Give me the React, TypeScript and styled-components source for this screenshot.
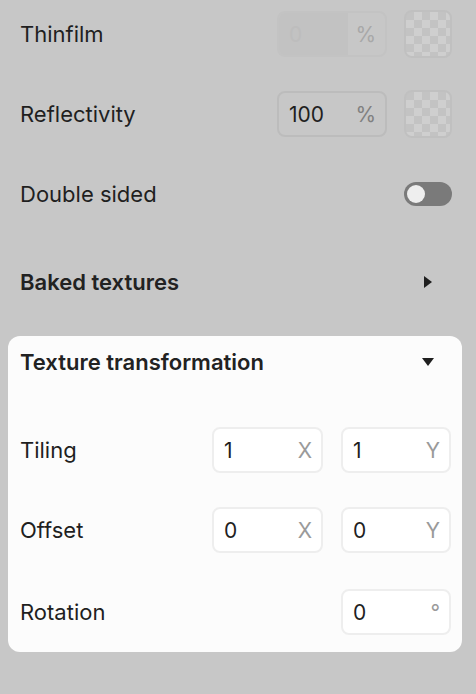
import React from "react";
import styled, { createGlobalStyle } from "styled-components";

const GlobalStyle = createGlobalStyle`
  html, body {
    margin: 0;
    padding: 0;
    background: #c7c7c7;
  }
  body {
    font-family: Inter, "Noto Sans", sans-serif;
    color: #1f1f1f;
    -webkit-font-smoothing: antialiased;
  }
`;

const Page = styled.div`
  display: flex;
  flex-direction: column;
  padding: 10px 24px 0 20px;
  height: 694px;
  box-sizing: border-box;
`;

const Row = styled.div<{ $mt?: number }>`
  display: flex;
  align-items: center;
  justify-content: space-between;
  height: 48px;
  margin-top: ${(p) => p.$mt ?? 0}px;
`;

const Label = styled.span`
  font-size: 22px;
  line-height: 26px;
  font-weight: 400;
  color: #1f1f1f;
`;

const HeaderLabel = styled.span`
  font-size: 22px;
  line-height: 26px;
  font-weight: 600;
  color: #222222;
`;

const Controls = styled.div<{ $gap?: number }>`
  display: flex;
  align-items: center;
  gap: ${(p) => p.$gap ?? 17}px;
`;

type Tone = "dim" | "dimDisabled" | "light";

const Field = styled.div<{ $tone: Tone; $w?: number }>`
  display: flex;
  align-items: stretch;
  width: ${(p) => p.$w ?? 110}px;
  height: 46px;
  box-sizing: border-box;
  border-radius: 8px;
  overflow: hidden;
  border: 2px solid
    ${(p) =>
      p.$tone === "light" ? "#eeeeee" : p.$tone === "dim" ? "#bcbcbc" : "#c3c3c3"};
  background: ${(p) => (p.$tone === "light" ? "#ffffff" : "#c7c7c7")};
`;

const FieldValue = styled.div<{ $tone: Tone }>`
  flex: 1;
  display: flex;
  align-items: center;
  padding-left: 10px;
  font-size: 21px;
  color: ${(p) => (p.$tone === "dimDisabled" ? "#bdbdbd" : "#1f1f1f")};
  background: ${(p) => (p.$tone === "dimDisabled" ? "#c2c2c2" : "transparent")};
`;

const FieldSuffix = styled.div<{ $tone: Tone }>`
  display: flex;
  align-items: center;
  justify-content: flex-end;
  width: 37px;
  padding-right: 9px;
  box-sizing: border-box;
  font-size: 21px;
  color: ${(p) =>
    p.$tone === "light" ? "#9a9a9a" : p.$tone === "dim" ? "#808080" : "#a8a8a8"};
`;

const Swatch = styled.div`
  width: 48px;
  height: 48px;
  box-sizing: border-box;
  border-radius: 8px;
  border: 2px solid #c0c0c0;
  background: repeating-conic-gradient(#cfcfcf 0% 25%, #c3c3c3 0% 50%) 0 0 / 16px 16px;
`;

const Toggle = styled.div`
  width: 48px;
  height: 24px;
  border-radius: 12px;
  background: #7a7a7a;
  display: flex;
  align-items: center;
  padding: 0 3px;
  box-sizing: border-box;
`;

const Knob = styled.div`
  width: 18px;
  height: 18px;
  border-radius: 50%;
  background: #eeeeee;
`;

const Arrow = styled.svg<{ $mr: number }>`
  display: block;
  margin-right: ${(p) => p.$mr}px;
`;

const Panel = styled.div`
  display: flex;
  flex-direction: column;
  margin: 30px -10px 0 -12px;
  padding: 2px 11px 16px 12px;
  background: #fcfcfc;
  border-radius: 12px;
`;

const NumberField = ({
  value,
  suffix,
  tone,
  w,
}: {
  value: string;
  suffix: string;
  tone: Tone;
  w?: number;
}) => (
  <Field $tone={tone} $w={w}>
    <FieldValue $tone={tone}>{value}</FieldValue>
    <FieldSuffix $tone={tone}>{suffix}</FieldSuffix>
  </Field>
);

export default function App() {
  return (
    <>
      <GlobalStyle />
      <Page>
        <Row>
          <Label>Thinfilm</Label>
          <Controls>
            <NumberField value="0" suffix="%" tone="dimDisabled" />
            <Swatch />
          </Controls>
        </Row>
        <Row $mt={32}>
          <Label>Reflectivity</Label>
          <Controls>
            <NumberField value="100" suffix="%" tone="dim" />
            <Swatch />
          </Controls>
        </Row>
        <Row $mt={32}>
          <Label>Double sided</Label>
          <Toggle>
            <Knob />
          </Toggle>
        </Row>
        <Row $mt={40}>
          <HeaderLabel>Baked textures</HeaderLabel>
          <Arrow $mr={20} width="8" height="12" viewBox="0 0 8 12">
            <path d="M0 0 L8 6 L0 12 Z" fill="#1f1f1f" />
          </Arrow>
        </Row>
        <Panel>
          <Row>
            <HeaderLabel>Texture transformation</HeaderLabel>
            <Arrow $mr={17} width="12" height="8" viewBox="0 0 12 8">
              <path d="M0 0 L12 0 L6 8 Z" fill="#1f1f1f" />
            </Arrow>
          </Row>
          <Row $mt={40}>
            <Label>Tiling</Label>
            <Controls $gap={18}>
              <NumberField value="1" suffix="X" tone="light" w={111} />
              <NumberField value="1" suffix="Y" tone="light" />
            </Controls>
          </Row>
          <Row $mt={32}>
            <Label>Offset</Label>
            <Controls $gap={18}>
              <NumberField value="0" suffix="X" tone="light" w={111} />
              <NumberField value="0" suffix="Y" tone="light" />
            </Controls>
          </Row>
          <Row $mt={34}>
            <Label>Rotation</Label>
            <NumberField value="0" suffix="°" tone="light" />
          </Row>
        </Panel>
      </Page>
    </>
  );
}
